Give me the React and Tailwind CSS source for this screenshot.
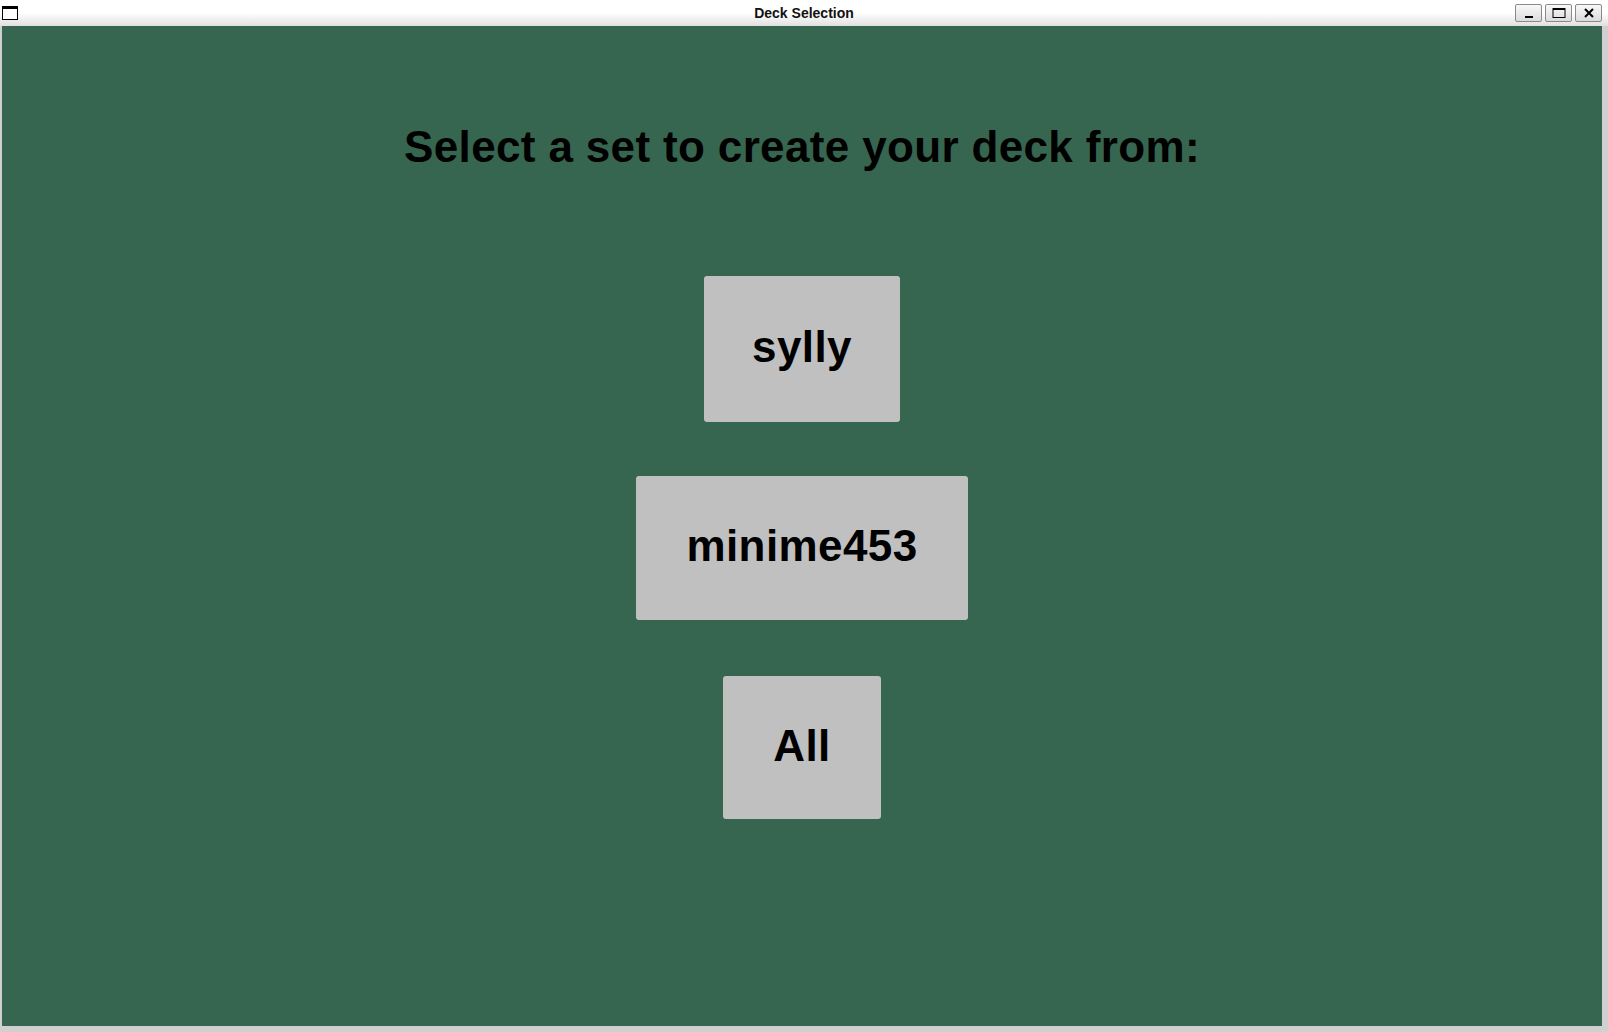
import React from "react";

const font = { fontFamily: '"Liberation Sans", Arial, sans-serif' };

function TitleButton({ children }) {
  return (
    <div className="w-[27px] h-[18px] rounded-[2px] border border-[#8a8a8a] bg-linear-to-b from-[#f8f8f8] to-[#dcdcdc] flex items-center justify-center">
      {children}
    </div>
  );
}

function SetButton({ label, w, h }) {
  return (
    <button
      className={`${w} ${h} bg-[#c0c0c0] rounded-[3px] flex items-center justify-center pb-1 text-black font-bold text-[44px] leading-[50px] tracking-[0.4px]`}
      style={font}
    >
      {label}
    </button>
  );
}

export default function App() {
  return (
    <div className="w-[1608px] h-[1032px] flex flex-col bg-[#d0d0d0] overflow-hidden" style={font}>
      {/* Title bar */}
      <div className="h-[26px] w-full bg-linear-to-b from-white via-white to-[#e0e0e0] flex items-center relative">
        <div className="absolute left-[2px] top-[6px] w-[16px] h-[14px] border border-black border-t-[3px] bg-white" />
        <div className="flex-1 text-center text-[14px] font-bold text-[#111] leading-none pl-[0px]">
          Deck Selection
        </div>
        <div className="absolute right-[6px] top-[4px] flex gap-[3px]">
          <TitleButton>
            <svg width="12" height="12" viewBox="0 0 12 12">
              <rect x="2" y="9" width="8" height="2" fill="#000" />
            </svg>
          </TitleButton>
          <TitleButton>
            <svg width="14" height="12" viewBox="0 0 14 12">
              <rect x="1" y="1.5" width="12" height="9" fill="none" stroke="#000" strokeWidth="1" />
              <rect x="1" y="1" width="12" height="2" fill="#000" />
            </svg>
          </TitleButton>
          <TitleButton>
            <svg width="12" height="12" viewBox="0 0 12 12">
              <path d="M2 2 L10 10 M10 2 L2 10" stroke="#000" strokeWidth="2" />
            </svg>
          </TitleButton>
        </div>
      </div>

      {/* Body */}
      <div className="flex h-[1000px]">
        <div className="w-[2px] bg-[#d0d0d0]" />
        <div className="w-[1600px] h-[1000px] bg-[#36664f] flex flex-col items-center pt-[96px]">
          <h1 className="text-[44px] leading-[50px] font-bold text-black tracking-[0.35px]" style={font}>
            Select a set to create your deck from:
          </h1>
          <div className="mt-[104px] flex flex-col items-center">
            <SetButton label="sylly" w="w-[196px]" h="h-[146px]" />
            <div className="h-[54px]" />
            <SetButton label="minime453" w="w-[332px]" h="h-[144px]" />
            <div className="h-[56px]" />
            <SetButton label="All" w="w-[158px]" h="h-[143px]" />
          </div>
        </div>
        <div className="w-[6px] bg-[#d0d0d0]" />
      </div>
      <div className="h-[6px] bg-[#d0d0d0]" />
    </div>
  );
}
